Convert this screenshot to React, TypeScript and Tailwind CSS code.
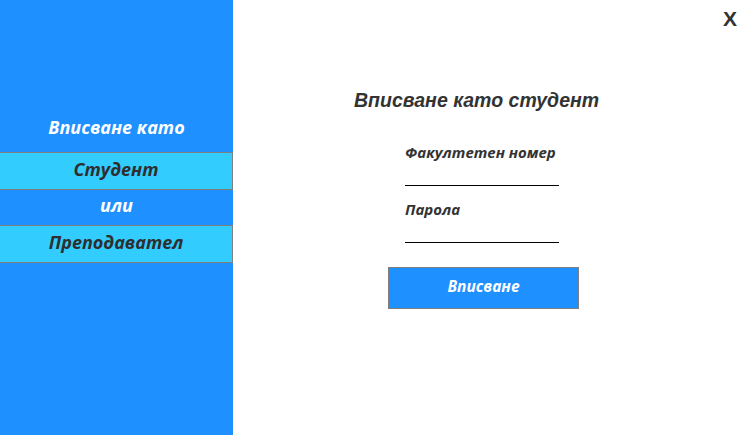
import React from "react";

export default function App() {
  const cal = { fontFamily: '"Open Sans", "Noto Sans", sans-serif' };
  const ar = { fontFamily: '"Liberation Sans", Arial, sans-serif' };
  return (
    <div className="flex w-[753px] h-[435px] bg-white overflow-hidden">
      <div className="w-[233px] h-full bg-[#1E90FF] flex flex-col pt-[116px]" style={cal}>
        <div className="h-[24px] pb-[2px] flex items-center justify-center text-white italic font-bold text-[18px]">
          Вписване като
        </div>
        <div className="mt-[12px] h-[38px] pb-[3px] bg-[#33CCFF] border border-l-0 border-[#808080] flex items-center justify-center text-[#2e2e2e] italic font-bold text-[18px]">
          Студент
        </div>
        <div className="h-[35px] pb-[4px] flex items-center justify-center text-white italic font-bold text-[18px]">
          или
        </div>
        <div className="h-[38px] pb-[3px] bg-[#33CCFF] border border-l-0 border-[#808080] flex items-center justify-center text-[#2e2e2e] italic font-bold text-[18px]">
          Преподавател
        </div>
      </div>
      <div className="flex-1 relative">
        <div className="absolute right-[16px] top-[7px] text-[21px] leading-[24px] font-bold text-[#333]" style={ar}>X</div>
        <div className="flex flex-col items-start pt-[88px]">
          <div className="ml-[121px] text-[19.5px] font-bold italic text-[#333] leading-[24px]" style={ar}>
            Вписване като студент
          </div>
          <div className="ml-[172px] w-[154px] mt-[30px]" style={cal}>
            <div className="text-[15px] font-bold italic text-[#333] leading-[20px]">Факултетен номер</div>
            <div className="h-[24px] border-b border-black"></div>
            <div className="mt-[13px] text-[15px] font-bold italic text-[#333] leading-[20px]">Парола</div>
            <div className="h-[24px] border-b border-black"></div>
          </div>
          <div
            className="ml-[155px] mt-[24px] w-[191px] h-[42px] pb-[2px] bg-[#1E90FF] border border-[#808080] flex items-center justify-center text-white italic font-bold text-[15.5px]"
            style={cal}
          >
            Вписване
          </div>
        </div>
      </div>
    </div>
  );
}
